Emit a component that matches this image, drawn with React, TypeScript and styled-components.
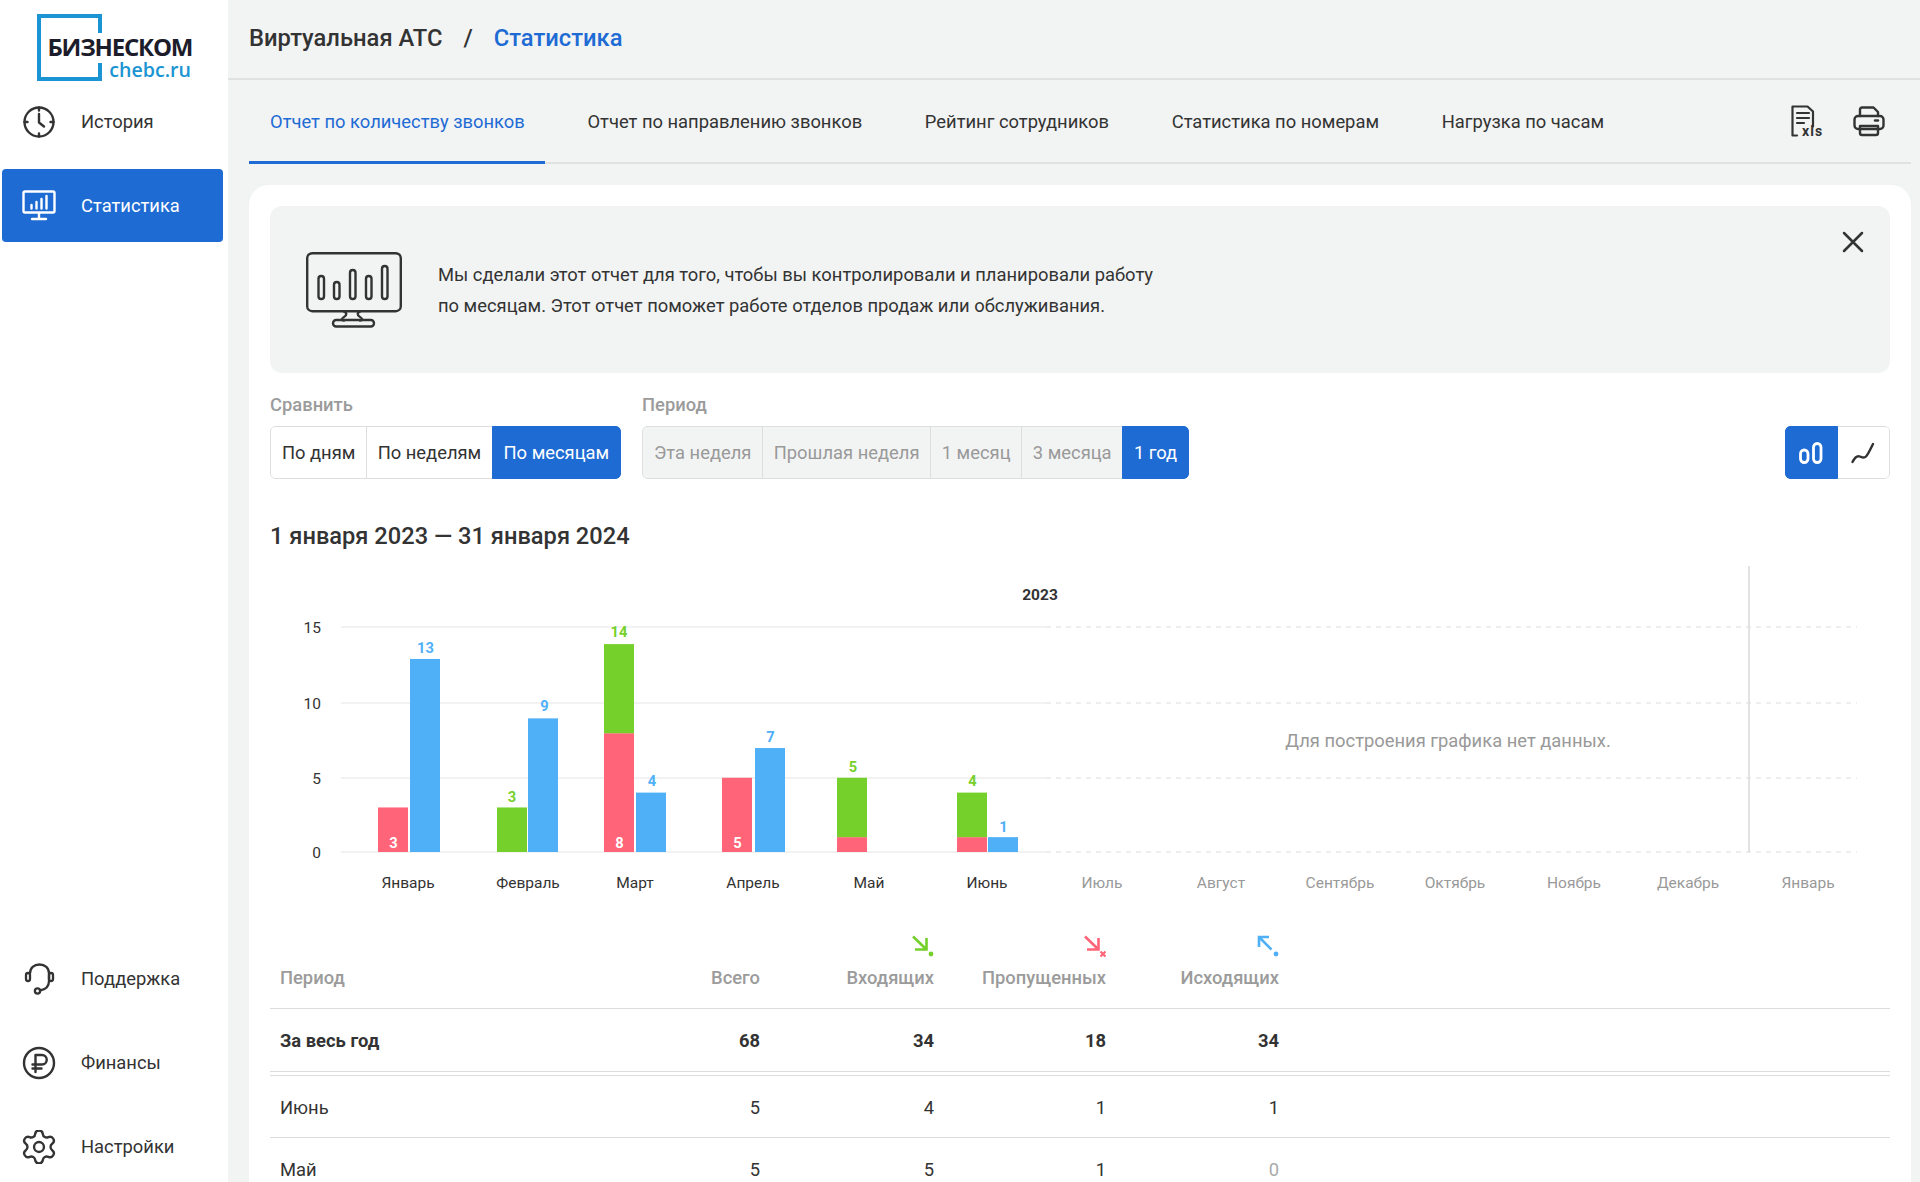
import React from "react";
import styled, { createGlobalStyle } from "styled-components";

const Global = createGlobalStyle`
  html, body { margin: 0; padding: 0; height: 100%; overflow: hidden; background: #f2f4f4; }
  body { font-family: Roboto, "Liberation Sans", sans-serif; color: #333; }
  #root { height: 100%; }
  * { box-sizing: border-box; }
`;

const BLUE = "#1e6bd4";
const RED = "#ff6478";
const GREEN = "#76d02b";
const SKY = "#4fb0f8";
const FS = "18.375px";

const Shell = styled.div`
  display: flex;
  width: 1920px;
  height: 1182px;
  overflow: hidden;
`;
const Sidebar = styled.aside`
  flex: 0 0 228px;
  background: #fff;
  display: flex;
  flex-direction: column;
  justify-content: space-between;
`;
const LogoWrap = styled.div`
  position: relative;
  width: 154px;
  height: 67px;
  margin: 14px 0 4px 37px;
`;
const LogoFrame = styled.svg`
  position: absolute;
  left: 0;
  top: 0;
`;
const LogoName = styled.div`
  position: absolute;
  left: 10.5px;
  top: 20.5px;
  font-family: "Open Sans", sans-serif;
  font-weight: 700;
  font-size: 24px;
  line-height: 24px;
  letter-spacing: -1.2px;
  color: #1c1c2a;
  white-space: nowrap;
`;
const LogoSub = styled.div`
  position: absolute;
  right: 0;
  top: 47px;
  font-family: "Open Sans", sans-serif;
  font-weight: 600;
  font-size: 19.6px;
  line-height: 18px;
  color: #1a94d2;
  white-space: nowrap;
`;
const NavGroup = styled.nav<{ $bottom?: boolean }>`
  display: flex;
  flex-direction: column;
  gap: 11px;
  padding: 0 5px 0 2px;
  margin-bottom: ${(p) => (p.$bottom ? "-1px" : "0")};
`;
const NavItem = styled.a<{ $active?: boolean }>`
  display: flex;
  align-items: center;
  gap: 25px;
  height: 73px;
  padding-left: 20px;
  border-radius: 4px;
  font-size: ${FS};
  color: ${(p) => (p.$active ? "#fff" : "#333")};
  background: ${(p) => (p.$active ? BLUE : "transparent")};
  svg { flex: 0 0 34px; }
`;
const Main = styled.main`
  flex: 1;
  min-width: 0;
  padding: 0 9px 0 21px;
`;
const Breadcrumbs = styled.div`
  display: flex;
  align-items: center;
  gap: 21px;
  height: 80px;
  margin: 0 -9px 0 -21px;
  padding: 0 0 2px 21px;
  border-bottom: 2px solid #e0e2e2;
  font-size: 23.75px;
  font-weight: 500;
`;
const Crumb = styled.span<{ $current?: boolean }>`
  color: ${(p) => (p.$current ? BLUE : "#333")};
`;
const TabsBar = styled.div`
  display: flex;
  align-items: stretch;
  gap: 21px;
  height: 84px;
  border-bottom: 2px solid #e0e2e2;
`;
const Tab = styled.a<{ $active?: boolean }>`
  display: flex;
  align-items: center;
  padding: 1px 20.7px 0 21px;
  height: 84px;
  font-size: ${FS};
  white-space: nowrap;
  color: ${(p) => (p.$active ? BLUE : "#333")};
  border-bottom: 3px solid ${(p) => (p.$active ? BLUE : "transparent")};
`;
const TabIcons = styled.div`
  margin-left: auto;
  display: flex;
  align-items: center;
  gap: 28px;
  padding-right: 26px;
`;
const Card = styled.section`
  margin-top: 21px;
  background: #fff;
  border-radius: 20px 20px 0 0;
  padding: 21px 21px 0;
`;
const Banner = styled.div`
  position: relative;
  display: flex;
  align-items: center;
  gap: 36px;
  height: 167px;
  padding: 1px 0 0 36px;
  background: #f2f4f4;
  border-radius: 12px;
`;
const BannerText = styled.p`
  margin: 0;
  font-size: ${FS};
  line-height: 31.5px;
  color: #333;
`;
const Close = styled.button`
  position: absolute;
  top: 25px;
  right: 26px;
  width: 22px;
  height: 22px;
  padding: 0;
  border: 0;
  background: none;
  display: flex;
`;
const Controls = styled.div`
  display: flex;
  align-items: flex-end;
  gap: 21px;
  margin-top: 21px;
`;
const Field = styled.div`
  display: flex;
  flex-direction: column;
  gap: 10px;
`;
const FieldLabel = styled.div`
  font-size: ${FS};
  line-height: 22px;
  font-weight: 500;
  color: #9b9b9b;
`;
const Segment = styled.div`
  display: flex;
  height: 53px;
  border-radius: 5px;
  overflow: hidden;
`;
const SegButton = styled.div<{ $active?: boolean; $muted?: boolean }>`
  display: flex;
  align-items: center;
  justify-content: center;
  padding: 0 10.9px;
  font-size: ${FS};
  white-space: nowrap;
  border: 1.5px solid ${(p) => (p.$active ? BLUE : "#dedede")};
  color: ${(p) => (p.$active ? "#fff" : p.$muted ? "#999" : "#333")};
  background: ${(p) => (p.$active ? BLUE : p.$muted ? "#f2f4f4" : "#fff")};
  & + & { margin-left: -1.5px; }
  &:first-child { border-radius: 5px 0 0 5px; }
  &:last-child { border-radius: 0 5px 5px 0; }
`;
const ChartSwitch = styled(Segment)`
  margin-left: auto;
`;
const SwitchButton = styled.div<{ $active?: boolean }>`
  display: flex;
  align-items: center;
  justify-content: center;
  width: 52.5px;
  border: 1.5px solid ${(p) => (p.$active ? BLUE : "#dedede")};
  border-left-width: ${(p) => (p.$active ? "1.5px" : "0")};
  border-radius: ${(p) => (p.$active ? "5px 0 0 5px" : "0 5px 5px 0")};
  background: ${(p) => (p.$active ? BLUE : "#fff")};
`;
const RangeTitle = styled.h2`
  margin: 42px 0 0;
  font-size: 23.65px;
  line-height: 30px;
  font-weight: 500;
  color: #333;
`;
const ChartSvg = styled.svg`
  display: block;
  margin-top: 8.8px;
  font-family: Roboto, sans-serif;
`;
const Table = styled.div`
  margin-top: 25px;
`;
const Row = styled.div<{ $head?: boolean; $strong?: boolean; $gapTop?: boolean }>`
  display: grid;
  grid-template-columns: 316px 174px 174px 172px 173px 1fr;
  align-items: ${(p) => (p.$head ? "end" : "center")};
  height: ${(p) => (p.$head ? "79px" : "63px")};
  padding: ${(p) => (p.$head ? "0 0 20px" : "2px 0 0")};
  margin-top: ${(p) => (p.$gapTop ? "3px" : "0")};
  border-top: ${(p) => (p.$gapTop ? "1.5px solid #dddddd" : "none")};
  border-bottom: 1.5px solid #dddddd;
  font-size: ${FS};
  font-weight: ${(p) => (p.$strong ? 700 : p.$head ? 500 : 400)};
  color: ${(p) => (p.$head ? "#9b9b9b" : "#333")};
`;
const PeriodCell = styled.div`
  padding-left: 10px;
`;
const NumCell = styled.div<{ $zero?: boolean }>`
  text-align: right;
  color: ${(p) => (p.$zero ? "#aaa" : "inherit")};
  svg { display: block; margin: 0 0 10px auto; }
`;

const ClockIcon = () => (
  <svg width="34" height="34" viewBox="0 0 34 34" fill="none" stroke="#333" strokeWidth="2.4" strokeLinecap="round" strokeLinejoin="round">
    <circle cx="17" cy="17" r="14.5" />
    <path d="M17 2.5v3M17 28.5v3M2.5 17h3M28.5 17h3" />
    <path d="M17 9v8.5l5 4" />
  </svg>
);
const MonitorSmall = () => (
  <svg width="34" height="32" viewBox="0 0 34 32" fill="none" stroke="#fff" strokeWidth="2.4" strokeLinecap="round" strokeLinejoin="round">
    <rect x="1.5" y="1.5" width="31" height="21" rx="1.5" />
    <path d="M17 23v5M10 29h14M9.5 15v3.5M14.5 12v6.5M19.5 9v9.5M24.5 6v12.5" />
  </svg>
);
const HeadsetIcon = () => (
  <svg width="34" height="32" viewBox="0 0 34 32" fill="none" stroke="#333" strokeWidth="2.3" strokeLinecap="round" strokeLinejoin="round">
    <path d="M8 10.5C8 5 12 1.5 17.5 1.5S27 5 27 10.5V18c0 5-3 8.5-9 9.5" />
    <rect x="4" y="10" width="4" height="8" rx="2" />
    <rect x="27" y="10" width="4" height="8" rx="2" />
    <circle cx="15.5" cy="28" r="2.6" />
  </svg>
);
const RubleIcon = () => (
  <svg width="34" height="34" viewBox="0 0 34 34" fill="none" stroke="#333" strokeWidth="2.4" strokeLinecap="round" strokeLinejoin="round">
    <circle cx="17" cy="17" r="15" />
    <path d="M13.5 26V9h6.5a4.5 4.5 0 0 1 0 9.5h-9.5M10.5 22.5h9" />
  </svg>
);
const GearIcon = () => (
  <svg width="34" height="34" viewBox="1.7 1.7 20.6 20.6" fill="none" stroke="#333" strokeWidth="1.45" strokeLinecap="round" strokeLinejoin="round">
    <path d="M9.671 4.136a2.34 2.34 0 0 1 4.659 0 2.34 2.34 0 0 0 3.319 1.915 2.34 2.34 0 0 1 2.33 4.033 2.34 2.34 0 0 0 0 3.831 2.34 2.34 0 0 1-2.33 4.033 2.34 2.34 0 0 0-3.319 1.915 2.34 2.34 0 0 1-4.659 0 2.34 2.34 0 0 0-3.32-1.915 2.34 2.34 0 0 1-2.33-4.033 2.34 2.34 0 0 0 0-3.831A2.34 2.34 0 0 1 6.35 6.051a2.34 2.34 0 0 0 3.32-1.915" />
    <circle cx="12" cy="12" r="3" />
  </svg>
);
const XlsIcon = () => (
  <svg width="34" height="32" viewBox="0 0 34 32" fill="none" stroke="#333" strokeWidth="2.2" strokeLinecap="round" strokeLinejoin="round">
    <path d="M6 30.5H1.5V1.5h15l5.5 5v15" />
    <path d="M6 8h12M6 13h12M6 18h7" />
    <text x="11" y="31" fontFamily="Roboto, sans-serif" fontWeight="700" fontSize="14" letterSpacing="1.1" fill="#333" stroke="none">xls</text>
  </svg>
);
const PrintIcon = () => (
  <svg width="32" height="32" viewBox="0 0 32 32" fill="none" stroke="#333" strokeWidth="2.4" strokeLinecap="round" strokeLinejoin="round">
    <path d="M7 11V4.5a2 2 0 0 1 2-2h11.5L25 7v4" />
    <rect x="1.5" y="11" width="29" height="13" rx="3.5" />
    <path d="M7 21v7a2 2 0 0 0 2 2h14a2 2 0 0 0 2-2v-7H7" />
    <path d="M22 15.5h3" />
  </svg>
);
const BannerMonitor = () => (
  <svg width="96" height="76" viewBox="0 0 96 76" fill="none" stroke="#333" strokeWidth="2.4" strokeLinecap="round" strokeLinejoin="round">
    <rect x="1.2" y="1.2" width="93.6" height="58" rx="5" />
    <rect x="12.5" y="24" width="5.5" height="23" rx="2.7" />
    <rect x="28" y="30" width="5.5" height="17" rx="2.7" />
    <rect x="44" y="18" width="5.5" height="29" rx="2.7" />
    <rect x="60" y="24" width="5.5" height="23" rx="2.7" />
    <rect x="76" y="14" width="5.5" height="33" rx="2.7" />
    <path d="M38 59.5c3 1 3 4 0 5.5s-2 3.5 0 3.5M54 59.5c-3 1-3 4 0 5.5s2 3.5 0 3.5" />
    <rect x="27" y="68" width="41" height="6.5" rx="3.2" />
  </svg>
);
const BarsIcon = () => (
  <svg width="28" height="22" viewBox="0 0 28 22" fill="none" stroke="#fff" strokeWidth="2.8">
    <rect x="3.5" y="8" width="7.5" height="12.5" rx="3.75" />
    <rect x="16.5" y="1.5" width="7.5" height="19" rx="3.75" />
  </svg>
);
const LineIcon = () => (
  <svg width="24" height="22" viewBox="0 0 24 22" fill="none" stroke="#333" strokeWidth="2.4" strokeLinecap="round" strokeLinejoin="round">
    <path d="M1.5 20c2-4 5-6.5 7.5-5.5s4 2 6 0S19 8 22 2" />
  </svg>
);
const CallIcon = ({ color, dir, mark }: { color: string; dir: "in" | "out"; mark: "dot" | "x" }) => (
  <svg width="22" height="22" viewBox="0 0 22 22" fill="none" stroke={color} strokeWidth="2.6">
    {dir === "in" ? <path d="M1 1.5l13 12.5M14.5 3v11.5H3" /> : <path d="M14.5 14.5L2 2M2 12V2h10" />}
    {mark === "dot" ? (
      <circle cx="19" cy="19" r="2.4" fill={color} stroke="none" />
    ) : (
      <path d="M16.5 16.5l5 5M21.5 16.5l-5 5" strokeWidth="2.2" />
    )}
  </svg>
);

type Seg = { h: number; c: string };
type Bar = { x: number; segs: Seg[]; top?: { t: string; x: number; y: number; c: string }; inner?: { t: string } };

const U = 14.85;
const BASE_Y = 852;

const bars: Bar[] = [
  { x: 378, segs: [{ h: 3, c: RED }], inner: { t: "3" } },
  { x: 410, segs: [{ h: 13, c: SKY }], top: { t: "13", x: 425.5, y: 647.5, c: SKY } },
  { x: 497, segs: [{ h: 3, c: GREEN }], top: { t: "3", x: 512, y: 797, c: GREEN } },
  { x: 528, segs: [{ h: 9, c: SKY }], top: { t: "9", x: 544.5, y: 706, c: SKY } },
  { x: 604, segs: [{ h: 8, c: RED }, { h: 6, c: GREEN }], top: { t: "14", x: 619, y: 632, c: GREEN }, inner: { t: "8" } },
  { x: 636, segs: [{ h: 4, c: SKY }], top: { t: "4", x: 652, y: 781, c: SKY } },
  { x: 722, segs: [{ h: 5, c: RED }], inner: { t: "5" } },
  { x: 755, segs: [{ h: 7, c: SKY }], top: { t: "7", x: 770.5, y: 737, c: SKY } },
  { x: 837, segs: [{ h: 1, c: RED }, { h: 4, c: GREEN }], top: { t: "5", x: 853, y: 767, c: GREEN } },
  { x: 957, segs: [{ h: 1, c: RED }, { h: 3, c: GREEN }], top: { t: "4", x: 972.5, y: 781, c: GREEN } },
  { x: 988, segs: [{ h: 1, c: SKY }], top: { t: "1", x: 1003.5, y: 827, c: SKY } },
];
const months: [string, number, boolean][] = [
  ["Январь", 408, true], ["Февраль", 528, true], ["Март", 635, true], ["Апрель", 753, true],
  ["Май", 869, true], ["Июнь", 987, true], ["Июль", 1102, false], ["Август", 1221, false],
  ["Сентябрь", 1340, false], ["Октябрь", 1455, false], ["Ноябрь", 1574, false], ["Декабрь", 1688, false],
  ["Январь", 1808, false],
];
const ticks: [string, number][] = [["15", 627], ["10", 703], ["5", 778], ["0", 852]];

const Chart = () => (
  <ChartSvg width={1620} height={345} viewBox="270 560 1620 345">
    {ticks.map(([t, y]) => (
      <g key={t}>
        <line x1={341} x2={1046} y1={y} y2={y} stroke="#eeeeee" strokeWidth={1.5} />
        <line x1={1046} x2={1857} y1={y} y2={y} stroke="#e9e9e9" strokeWidth={1.5} strokeDasharray="5 5" />
        <text x={321} y={y + 5.5} textAnchor="end" fontSize={15.5} fill="#333">{t}</text>
      </g>
    ))}
    <line x1={1749} x2={1749} y1={566} y2={852} stroke="#d9d9d9" strokeWidth={1.5} />
    <text x={1040} y={599.5} textAnchor="middle" fontSize={15.5} fontWeight={700} fill="#333">2023</text>
    <text x={1448} y={746.5} textAnchor="middle" fontSize={18.375} fill="#999">Для построения графика нет данных.</text>
    {bars.map((b) => {
      let acc = 0;
      return (
        <g key={b.x}>
          {b.segs.map((s, i) => {
            const y = BASE_Y - (acc + s.h) * U;
            acc += s.h;
            return <rect key={i} x={b.x} y={y} width={30} height={s.h * U} fill={s.c} />;
          })}
          {b.top && (
            <text x={b.top.x} y={b.top.y + 5} textAnchor="middle" fontSize={14.7} fontWeight={700} fill={b.top.c}>{b.top.t}</text>
          )}
          {b.inner && (
            <text x={b.x + 15.5} y={848} textAnchor="middle" fontSize={14.7} fontWeight={700} fill="#fff">{b.inner.t}</text>
          )}
        </g>
      );
    })}
    {months.map(([m, x, on]) => (
      <text key={m + x} x={x} y={887.5} textAnchor="middle" fontSize={15.5} fill={on ? "#333" : "#999"}>{m}</text>
    ))}
  </ChartSvg>
);

const App = () => (
  <Shell>
    <Global />
    <Sidebar>
      <div>
        <LogoWrap>
          <LogoFrame width="154" height="67" viewBox="0 0 154 67" fill="none" stroke="#1a94d2" strokeWidth="4">
            <path d="M63 19V2H2v63h61V49" />
          </LogoFrame>
          <LogoName>БИЗНЕСКОМ</LogoName>
          <LogoSub>chebc.ru</LogoSub>
        </LogoWrap>
        <NavGroup>
          <NavItem><ClockIcon />История</NavItem>
          <NavItem $active><MonitorSmall />Статистика</NavItem>
        </NavGroup>
      </div>
      <NavGroup $bottom>
        <NavItem><HeadsetIcon />Поддержка</NavItem>
        <NavItem><RubleIcon />Финансы</NavItem>
        <NavItem><GearIcon />Настройки</NavItem>
      </NavGroup>
    </Sidebar>
    <Main>
      <Breadcrumbs>
        <Crumb>Виртуальная АТС</Crumb>
        <Crumb>/</Crumb>
        <Crumb $current>Статистика</Crumb>
      </Breadcrumbs>
      <TabsBar>
        <Tab $active>Отчет по количеству звонков</Tab>
        <Tab>Отчет по направлению звонков</Tab>
        <Tab>Рейтинг сотрудников</Tab>
        <Tab>Статистика по номерам</Tab>
        <Tab>Нагрузка по часам</Tab>
        <TabIcons><XlsIcon /><PrintIcon /></TabIcons>
      </TabsBar>
      <Card>
        <Banner>
          <BannerMonitor />
          <BannerText>
            Мы сделали этот отчет для того, чтобы вы контролировали и планировали работу<br />
            по месяцам. Этот отчет поможет работе отделов продаж или обслуживания.
          </BannerText>
          <Close aria-label="Закрыть">
            <svg width="22" height="22" viewBox="0 0 22 22" stroke="#333" strokeWidth="2.5" strokeLinecap="round"><path d="M2 2l18 18M20 2L2 20" /></svg>
          </Close>
        </Banner>
        <Controls>
          <Field>
            <FieldLabel>Сравнить</FieldLabel>
            <Segment>
              <SegButton>По дням</SegButton>
              <SegButton>По неделям</SegButton>
              <SegButton $active>По месяцам</SegButton>
            </Segment>
          </Field>
          <Field>
            <FieldLabel>Период</FieldLabel>
            <Segment>
              <SegButton $muted>Эта неделя</SegButton>
              <SegButton $muted>Прошлая неделя</SegButton>
              <SegButton $muted>1 месяц</SegButton>
              <SegButton $muted>3 месяца</SegButton>
              <SegButton $active>1 год</SegButton>
            </Segment>
          </Field>
          <ChartSwitch>
            <SwitchButton $active><BarsIcon /></SwitchButton>
            <SwitchButton><LineIcon /></SwitchButton>
          </ChartSwitch>
        </Controls>
        <RangeTitle>1 января 2023 — 31 января 2024</RangeTitle>
        <Chart />
        <Table>
          <Row $head>
            <PeriodCell>Период</PeriodCell>
            <NumCell>Всего</NumCell>
            <NumCell><CallIcon color={GREEN} dir="in" mark="dot" />Входящих</NumCell>
            <NumCell><CallIcon color={RED} dir="in" mark="x" />Пропущенных</NumCell>
            <NumCell><CallIcon color={SKY} dir="out" mark="dot" />Исходящих</NumCell>
          </Row>
          <Row $strong>
            <PeriodCell>За весь год</PeriodCell>
            <NumCell>68</NumCell><NumCell>34</NumCell><NumCell>18</NumCell><NumCell>34</NumCell>
          </Row>
          <Row $gapTop>
            <PeriodCell>Июнь</PeriodCell>
            <NumCell>5</NumCell><NumCell>4</NumCell><NumCell>1</NumCell><NumCell>1</NumCell>
          </Row>
          <Row>
            <PeriodCell>Май</PeriodCell>
            <NumCell>5</NumCell><NumCell>5</NumCell><NumCell>1</NumCell><NumCell $zero>0</NumCell>
          </Row>
        </Table>
      </Card>
    </Main>
  </Shell>
);

export default App;
